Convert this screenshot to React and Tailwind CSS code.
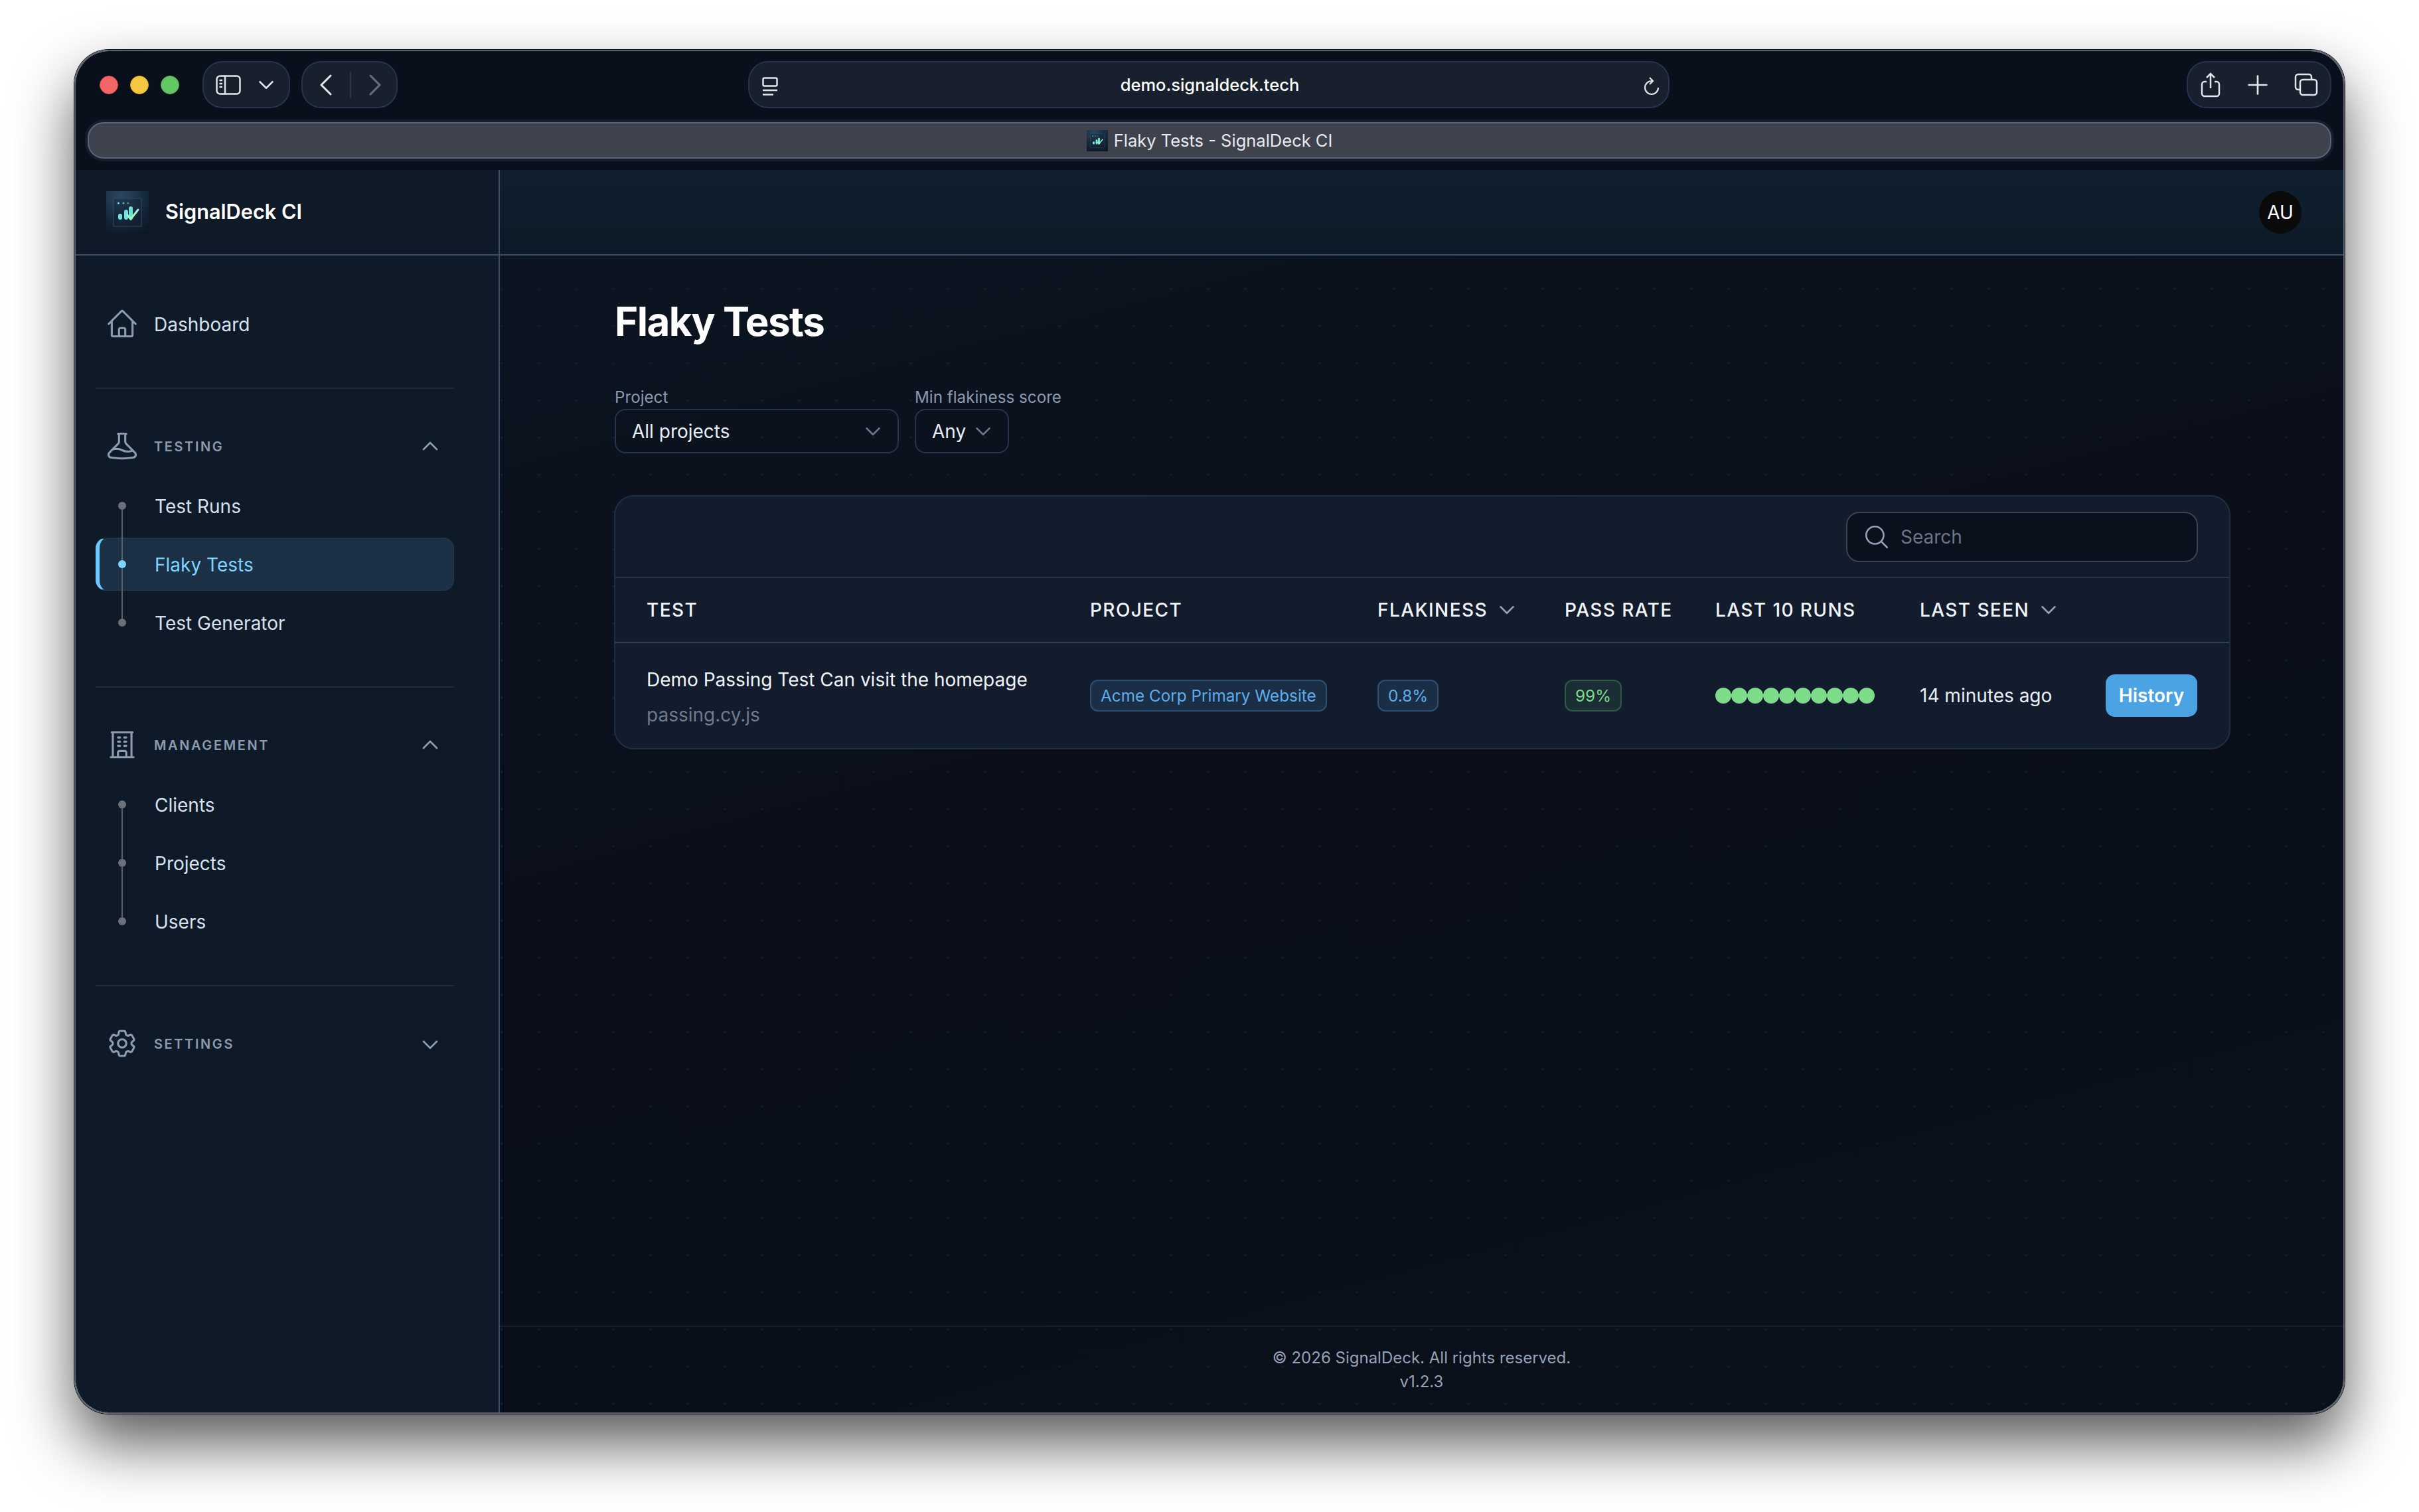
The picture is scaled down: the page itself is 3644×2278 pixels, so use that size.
import { ChevronDown, ChevronLeft, ChevronRight, ChevronUp, Plus } from "lucide-react";
import {
  HiOutlineBeaker,
  HiOutlineBuildingOffice,
  HiOutlineCog6Tooth,
  HiOutlineHome,
  HiOutlineMagnifyingGlass,
} from "react-icons/hi2";

const pillClass = "flex h-[71px] items-center rounded-[30px] border-2 border-[#24344f] bg-[#18202e]";
const thClass = "flex items-center gap-[18px] text-[28px] font-medium tracking-[0.05em] text-[#f1f5f9]";
const dividerClass = "mb-[46px] mt-[56px] h-[2px] bg-[#1e2d40]";

function Logo({ size, id }) {
  return (
    <svg width={size} height={size} viewBox="0 0 64 64" className="shrink-0">
      <defs>
        <radialGradient id={id} cx="0.35" cy="0.1" r="1.05">
          <stop offset="0" stopColor="#2a4862" />
          <stop offset="0.6" stopColor="#14263a" />
          <stop offset="1" stopColor="#0c1622" />
        </radialGradient>
      </defs>
      <rect width="64" height="64" fill={`url(#${id})`} />
      <rect x="11" y="11" width="42" height="42" fill="#12202f" fillOpacity="0.35" stroke="#2e4a63" strokeWidth="1" />
      <circle cx="18.500" cy="18" r="1.600" fill="#67d5f0" />
      <circle cx="26" cy="18" r="1.600" fill="#52b4a8" />
      <circle cx="33" cy="18" r="1.600" fill="#4f8f7e" />
      <rect x="18" y="34" width="6" height="9" rx="3" fill="#6fe3e0" />
      <rect x="27" y="28" width="6" height="15" rx="3" fill="#6fe3e0" />
      <rect x="34" y="23" width="6" height="20" rx="3" fill="#6fe3d0" />
      <path d="M32 36l5 6 11-14" fill="none" stroke="#a5f3c8" strokeWidth="3" strokeLinecap="round" />
    </svg>
  );
}

function SubItem({ label, active }) {
  return (
    <div
      className={
        active
          ? "flex h-[80px] items-center rounded-[16px] border border-l-[6px] border-[#24394f] border-l-[#6cc9ff] bg-[#1c3146] pl-[28px] text-[#7dd3fc]"
          : "flex h-[80px] items-center pl-[34px] text-[#d5e2ee]"
      }
    >
      <span className={active ? "relative z-10 h-[12px] w-[12px] rounded-full bg-[#7dd3fc]" : "relative z-10 h-[12px] w-[12px] rounded-full bg-[#6b7078]"} />
      <span className="ml-[43px] pt-[1px] text-[28px]">{label}</span>
    </div>
  );
}

function NavGroup({ icon: Icon, title, open, items = [] }) {
  const Chevron = open ? ChevronUp : ChevronDown;
  return (
    <div>
      <div className="flex h-[80px] items-center text-[#8b9cb0]">
        <span className="flex w-[80px] justify-center">
          <Icon size={50} />
        </span>
        <span className="ml-[8px] flex-1 pt-[1px] text-[20px] font-semibold tracking-[0.13em]">{title}</span>
        <Chevron size={40} strokeWidth={1.6} className={open ? "mr-[16px]" : "mr-[16px] mt-[4px]"} />
      </div>
      {items.length > 0 && (
        <div className="relative mt-[10px] flex flex-col gap-[8px]">
          <span className="absolute bottom-[40px] left-[39px] top-[40px] z-10 w-[2px] bg-[#5a5f6a]" />
          {items.map((item) => (
            <SubItem key={item.label} label={item.label} active={item.active} />
          ))}
        </div>
      )}
    </div>
  );
}

function Sidebar() {
  return (
    <aside className="flex w-[639px] shrink-0 flex-col border-r-2 border-[#33506f] bg-[#0e1a28]">
      <div className="flex h-[129px] shrink-0 items-center border-b-2 border-[#33506f] pl-[46px]">
        <Logo size={64} id="logo-side" />
        <span className="ml-[25px] text-[30.700px] font-semibold text-white">SignalDeck CI</span>
      </div>
      <nav className="pl-[30px] pr-[67px] pt-[63px]">
        <div className="flex h-[80px] items-center text-[#8b9cb0]">
          <span className="flex w-[80px] justify-center">
            <HiOutlineHome size={50} />
          </span>
          <span className="ml-[8px] pt-[1px] text-[28px] text-[#d5e2ee]">Dashboard</span>
        </div>
        <div className={dividerClass} />
        <NavGroup
          icon={HiOutlineBeaker}
          title="TESTING"
          open
          items={[{ label: "Test Runs" }, { label: "Flaky Tests", active: true }, { label: "Test Generator" }]}
        />
        <div className={dividerClass} />
        <NavGroup
          icon={HiOutlineBuildingOffice}
          title="MANAGEMENT"
          open
          items={[{ label: "Clients" }, { label: "Projects" }, { label: "Users" }]}
        />
        <div className={dividerClass} />
        <NavGroup icon={HiOutlineCog6Tooth} title="SETTINGS" />
      </nav>
    </aside>
  );
}

function WindowChrome() {
  return (
    <div className="h-[179px] shrink-0 bg-[#0a101b] pt-[15px]">
      <div className="flex h-[71px] items-center pl-[36px] pr-[18px]">
        <div className="flex gap-[18px]">
          <span className="h-[28px] w-[28px] rounded-full border border-[#d94c4c] bg-[#f26666]" />
          <span className="h-[28px] w-[28px] rounded-full border border-[#d9a62e] bg-[#f5c93f]" />
          <span className="h-[28px] w-[28px] rounded-full border border-[#4fae55] bg-[#62c762]" />
        </div>
        <div className={`${pillClass} ml-[35px] w-[132px] pl-[18px]`}>
          <svg width="38" height="30" viewBox="0 0 38 30" fill="none" stroke="#e2e5ea" strokeWidth="2.500">
            <rect x="1.500" y="1.500" width="35" height="27" rx="5" />
            <path d="M14 2v26M5.500 8H10M5.500 13H10M5.500 18H10" />
          </svg>
          <ChevronDown size={38} strokeWidth={1.6} className="ml-[19px] text-[#e2e5ea]" />
        </div>
        <div className={`${pillClass} ml-[17px] w-[145px] justify-between pl-[7px] pr-[4px]`}>
          <ChevronLeft size={56} strokeWidth={1.300} className="text-[#e2e5ea]" />
          <span className="h-[40px] w-[2px] bg-[#2c3646]" />
          <ChevronRight size={56} strokeWidth={1.300} className="text-[#666e7a]" />
        </div>
        <div className={`${pillClass} relative ml-[528px] w-[1388px] justify-center`}>
          <svg width="24" height="28" viewBox="0 0 24 28" className="absolute left-[19px] top-[22px]" fill="none" stroke="#e2e5ea" strokeWidth="2.500">
            <rect x="1.500" y="1.500" width="21" height="12" rx="2" />
            <path d="M1 20h22M1 26.500h16" />
          </svg>
          <span className="pl-[3px] pt-[2px] text-[25.500px] font-medium text-white">demo.signaldeck.tech</span>
          <svg width="26" height="28" viewBox="0 0 26 28" className="absolute right-[12px] top-[22px]" fill="none" stroke="#e2e5ea" strokeWidth="2.200">
            <path d="M13 6a10 10 0 1 0 10 10M10 1l5 5-5 5" />
          </svg>
        </div>
        <div className={`${pillClass} ml-auto w-[218px] pl-[19px]`}>
          <svg width="30" height="38" viewBox="0 0 30 38" fill="none" stroke="#e2e5ea" strokeWidth="2.500">
            <path d="M9 14H6a4 4 0 0 0-4 4v14a4 4 0 0 0 4 4h18a4 4 0 0 0 4-4V18a4 4 0 0 0-4-4h-3M15 24V2M9 8l6-6 6 6" />
          </svg>
          <Plus size={46} strokeWidth={1.400} className="ml-[33px] text-[#e2e5ea]" />
          <svg width="36" height="35" viewBox="0 0 36 35" className="ml-[32px]" fill="none" stroke="#e2e5ea" strokeWidth="2.500">
            <path d="M8 25H6a4 4 0 0 1-4-4V6a4 4 0 0 1 4-4h16a4 4 0 0 1 4 4v3" />
            <rect x="9" y="10" width="25" height="23" rx="4" />
          </svg>
        </div>
      </div>
      <div className="mx-[18px] mt-[21px] flex h-[55px] items-center justify-center gap-[9px] rounded-[24px] border-2 border-[#5b6478] bg-[#3d424c] shadow-[0_0_0_4px_#161d2a]">
        <Logo size={32} id="logo-tab" />
        <span className="pt-[1px] text-[25.500px] text-[#e8eaee]">Flaky Tests - SignalDeck CI</span>
      </div>
    </div>
  );
}

function FilterSelect({ label, value, width }) {
  return (
    <div>
      <div className="h-[34px] text-[24.200px] leading-[34px] text-[#8a9bae]">{label}</div>
      <div className={`${width} flex h-[67px] items-center rounded-[16px] border-2 border-[#24344a] pl-[24px] text-[28px] text-[#e8eef5]`}>
        {value}
        <ChevronDown size={38} strokeWidth={1.600} className="ml-auto mr-[18px] text-[#6b7686]" />
      </div>
    </div>
  );
}

function Badge({ children, tone }) {
  return (
    <span
      className={
        tone === "green"
          ? "inline-flex h-[48px] items-center rounded-[12px] border-2 border-[#2e5a44] bg-[#1b2e35] px-[14px] text-[24.300px] text-[#7ddc8a]"
          : "inline-flex h-[48px] items-center rounded-[12px] border-2 border-[#2e5072] bg-[#1a2f45] px-[14px] text-[24.300px] text-[#5dadec]"
      }
    >
      {children}
    </span>
  );
}

function FlakyTable() {
  const columns = "grid grid-cols-[668px_433px_282px_227px_308px_280px_138px] pl-[47px] pr-[48px]";
  return (
    <div className="ml-[-1px] mt-[63px] w-[2435px] rounded-[30px] border-2 border-[#1f2f44] bg-[#121c2d]">
      <div className="flex h-[123px] items-center justify-end border-b-2 border-[#22334a] pr-[47px]">
        <div className="flex h-[76px] w-[530px] items-center rounded-[20px] border-2 border-[#3b4350] bg-[#0a101c] pl-[23px] text-[#94a3b8]">
          <HiOutlineMagnifyingGlass size={42} />
          <span className="ml-[15px] text-[28px] text-[#6b7686]">Search</span>
        </div>
      </div>
      <div className={`${columns} h-[98px] items-center border-b-2 border-[#2d4562]`}>
        <div className={thClass}>TEST</div>
        <div className={thClass}>PROJECT</div>
        <div className={thClass}>
          FLAKINESS
          <ChevronDown size={38} strokeWidth={1.600} className="-mx-[8px] text-[#94a3b8]" />
        </div>
        <div className={thClass}>PASS RATE</div>
        <div className={thClass}>LAST 10 RUNS</div>
        <div className={thClass}>
          LAST SEEN
          <ChevronDown size={38} strokeWidth={1.600} className="-mx-[8px] text-[#94a3b8]" />
        </div>
        <div />
      </div>
      <div className={`${columns} h-[158px] items-center`}>
        <div className="flex flex-col gap-[17px] pt-[5px]">
          <span className="text-[28px] leading-[36px] text-[#f1f5f9]">Demo Passing Test Can visit the homepage</span>
          <span className="text-[28px] leading-[36px] text-[#6d7a8b]">passing.cy.js</span>
        </div>
        <div>
          <Badge>Acme Corp Primary Website</Badge>
        </div>
        <div>
          <Badge>0.8%</Badge>
        </div>
        <div>
          <Badge tone="green">99%</Badge>
        </div>
        <div className="flex">
          {Array.from({ length: 10 }, (_, i) => (
            <span key={i} className="h-[24px] w-[24px] rounded-full bg-[#7ddc8a]" />
          ))}
        </div>
        <div className="text-[28px] text-[#e8eef5]">14 minutes ago</div>
        <div className="flex h-[64px] items-center justify-center rounded-[14px] bg-[#4ba3e3] text-[28px] font-semibold text-white">
          History
        </div>
      </div>
    </div>
  );
}

export default function App() {
  return (
    <div className="h-[2278px] w-[3644px] overflow-hidden bg-white pl-[112px] pt-[75px] font-[family-name:Inter,sans-serif]">
      <div className="flex h-[2055px] w-[3420px] flex-col overflow-hidden rounded-[52px] border-2 border-[#5b6270] shadow-[0_0_0_1px_#111,0_45px_90px_rgba(0,0,0,0.65)]">
        <WindowChrome />
        <div className="flex min-h-0 flex-1">
          <Sidebar />
          <main className="flex min-w-0 flex-1 flex-col bg-[radial-gradient(circle,#121a26_2px,transparent_2px),linear-gradient(165deg,#0c1522,#0a0f1a_45%,#0a111b)] bg-[position:-25px_-17px,0_0] bg-[size:56px_56px,100%_100%]">
            <header className="flex h-[129px] shrink-0 items-center justify-end border-b-2 border-[#33506f] bg-gradient-to-b from-[#10202f] to-[#0d1a28] pr-[63px]">
              <span className="flex h-[64px] w-[64px] items-center justify-center rounded-full bg-[#0a0a0a] text-[28px] text-white">AU</span>
            </header>
            <section className="flex-1 pl-[173px] pt-[63px]">
              <h1 className="mb-[62px] text-[60px] font-bold leading-[72px] tracking-[-0.025em] text-white">Flaky Tests</h1>
              <div className="flex gap-[24px]">
                <FilterSelect label="Project" value="All projects" width="w-[428px]" />
                <FilterSelect label="Min flakiness score" value="Any" width="w-[142px]" />
              </div>
              <FlakyTable />
            </section>
            <footer className="h-[131px] shrink-0 border-t-2 border-[#151d2a] pt-[29px] text-center text-[24px] leading-[36px] text-[#94a3b8]">
              <div>© 2026 SignalDeck. All rights reserved.</div>
              <div>v1.2.3</div>
            </footer>
          </main>
        </div>
      </div>
    </div>
  );
}
